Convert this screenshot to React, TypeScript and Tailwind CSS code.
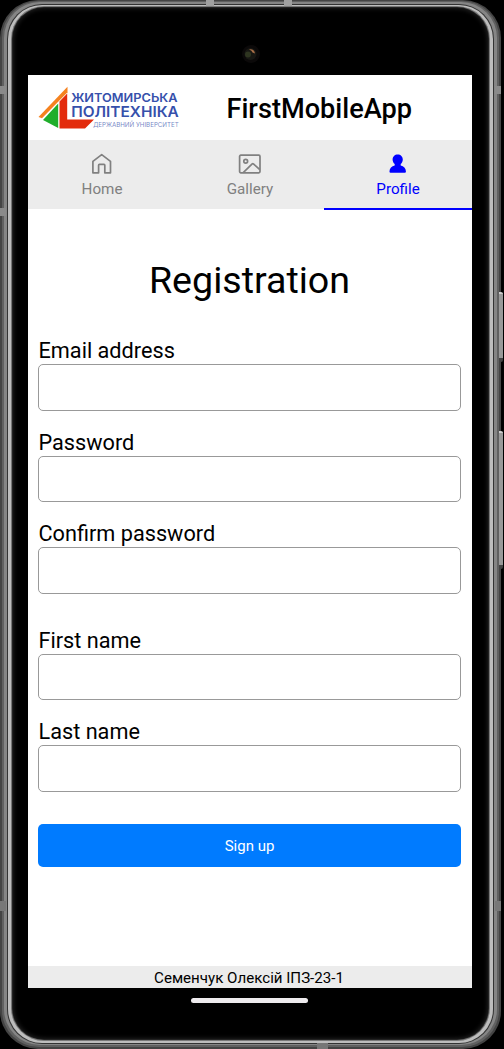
import React from "react";

function Logo() {
  return (
    <svg width="150" height="52" viewBox="0 -3 150 52" className="block" aria-hidden="true">
      <path d="M0.5 31 L29.5 0.8 V6.2 L4 32.3 Z" fill="#f5821f" />
      <path d="M5 34 L20.2 17.6 V42 Z" fill="#1fae2b" />
      <path d="M21.5 15.5 L29.2 7.6 V33.6 H56 L47 42.6 H21.5 Z" fill="#e32b0c" />
      <g fill="#3650ab" fontFamily="Inter, 'Open Sans', sans-serif">
        <text x="33.2" y="16.4" fontSize="12" fontWeight="600" textLength="106.4" lengthAdjust="spacingAndGlyphs">ЖИТОМИРСЬКА</text>
        <text x="33.2" y="30.7" fontSize="14.7" fontWeight="600" textLength="107.6" lengthAdjust="spacingAndGlyphs">ПОЛІТЕХНІКА</text>
        <text x="55.2" y="41.3" fontSize="6.4" fillOpacity=".7" textLength="85.6" lengthAdjust="spacingAndGlyphs">ДЕРЖАВНИЙ УНІВЕРСИТЕТ</text>
      </g>
    </svg>
  );
}

function HomeIcon() {
  return (
    <svg width="22" height="22" viewBox="0 0 22 22" fill="none" stroke="currentColor" strokeWidth="1.7" strokeLinejoin="round">
      <path d="M1.9 19.8 V8.4 L10.7 1.6 L19.5 8.4 V19.8 H13.8 V12.2 Q13.8 11.4 13 11.4 H8.4 Q7.6 11.4 7.6 12.2 V19.8 Z" />
    </svg>
  );
}

function GalleryIcon() {
  return (
    <svg width="24" height="22" viewBox="0 0 24 22" fill="none" stroke="currentColor" strokeWidth="1.7" strokeLinejoin="round">
      <rect x="1.6" y="2.2" width="20.4" height="17.6" rx="1.2" />
      <circle cx="7.7" cy="8.2" r="1.9" />
      <path d="M5.2 19.6 L14.2 10.9 Q14.8 10.4 15.4 10.9 L21.8 16.6" />
    </svg>
  );
}

function ProfileIcon() {
  return (
    <svg width="22" height="22" viewBox="0 0 22 22" fill="currentColor">
      <path d="M10.7 1.5 C13.7 1.5 15.8 3.6 15.8 6.5 C15.8 8.4 15 10 13.7 11 V12.4 C16.7 13.3 18.9 15.2 18.9 18.3 V18.7 Q18.9 19.7 17.9 19.7 H3.5 Q2.5 19.7 2.5 18.7 V18.3 C2.5 15.2 4.7 13.3 7.7 12.4 V11 C6.4 10 5.6 8.4 5.6 6.5 C5.6 3.6 7.7 1.5 10.7 1.5 Z" />
    </svg>
  );
}

function Tab({ label, icon, active = false }: { label: string; icon: React.ReactNode; active?: boolean }) {
  return (
    <button
      type="button"
      className={
        active
          ? "flex flex-1 flex-col items-center border-b-2 border-[#0000ff] pt-[13px] text-[#0000ff]"
          : "flex flex-1 flex-col items-center border-b border-white pt-[13px] text-[#808080]"
      }
    >
      {icon}
      <span className="mt-[4px] text-[15.2px] leading-5">{label}</span>
    </button>
  );
}

function Field({ label, type = "text" }: { label: string; type?: string }) {
  return (
    <label className="flex h-[72.5px] flex-col">
      <span className="h-[26px] pl-[0.5px] text-[21.7px] leading-[26px]">{label}</span>
      <input type={type} className="h-[46.5px] w-full rounded-[5px] border border-[#999999] bg-white px-3 outline-none" />
    </label>
  );
}

const frameLayers = [
  "rounded-[38px] bg-[#444444] px-[2px] pt-px pb-[2px]",
  "rounded-[37px] bg-[#606060] px-[2px] pt-px pb-[2px]",
  "rounded-[36px] bg-[#858585] px-[3px] pt-[2px] pb-px",
  "rounded-[35px] bg-[#333333] px-px pt-px pb-px",
  "rounded-[34px] bg-[#bdbdbd] px-[3px] pt-px pb-[2px]",
  "rounded-[33px] bg-[#777777] px-px pt-px pb-px",
  "rounded-[32px] bg-[#222222] px-px pt-px pb-px",
];

function PhoneFrame({ children }: { children: React.ReactNode }) {
  return frameLayers.reduceRight<React.ReactElement>(
    (inner, layer) => <div className={`h-full ${layer}`}>{inner}</div>,
    <div className="flex h-full flex-col rounded-[31px] bg-black shadow-[inset_0_0_5px_#2a2a2a]">{children}</div>,
  );
}

export default function App() {
  return (
    <div className="relative h-[1049px] w-[504px] overflow-hidden bg-black font-[Roboto,'Liberation_Sans',sans-serif] text-black">
      <div className="h-full w-[501px]">
        <PhoneFrame>
          <div className="flex h-[67px] shrink-0 items-start justify-center pt-[36px]">
            <svg width="20" height="20" viewBox="0 0 20 20" aria-hidden="true">
              <circle cx="10" cy="10" r="9" fill="#0b0909" />
              <circle cx="9.5" cy="10" r="6" fill="#171713" />
              <circle cx="7" cy="10.5" r="3" fill="#2e3520" />
              <path d="M8 5.5 Q13 4.5 14 9.5 L11.5 8.5 Q11 6.5 8 5.5 Z" fill="#a86f48" />
            </svg>
          </div>
          <div className="ml-[15px] flex h-[913px] w-[444px] shrink-0 flex-col bg-white">
            <header className="flex h-[65px] shrink-0 items-start pl-[10px] pt-[8px]">
              <Logo />
              <h1 className="ml-[38.5px] mt-[10px] text-[27.15px] font-medium leading-8">FirstMobileApp</h1>
            </header>
            <nav className="flex h-[70px] shrink-0 bg-[#ececec]">
              <Tab label="Home" icon={<HomeIcon />} />
              <Tab label="Gallery" icon={<GalleryIcon />} />
              <Tab label="Profile" icon={<ProfileIcon />} active />
            </nav>
            <main className="flex flex-1 flex-col pl-[10px] pr-[11px]">
              <h2 className="mt-[46px] h-[48px] text-center text-[37.6px] leading-[49px]">Registration</h2>
              <form className="mt-[34px] flex flex-col">
                <div className="flex flex-col gap-[19px]">
                  <Field label="Email address" type="email" />
                  <Field label="Password" type="password" />
                  <Field label="Confirm password" type="password" />
                </div>
                <div className="mt-[34px] flex flex-col gap-[19px]">
                  <Field label="First name" />
                  <Field label="Last name" />
                </div>
                <button type="button" className="mt-[32px] h-[43px] rounded-[5px] bg-[#007bff] pt-[2px] text-[15px] text-white">
                  Sign up
                </button>
              </form>
            </main>
            <footer className="h-[22px] shrink-0 bg-[#ececec] pr-[2px] text-center text-[15.1px] leading-[24px]">
              Семенчук Олексій ІПЗ-23-1
            </footer>
          </div>
          <div className="ml-[178px] mt-[10px] h-[5px] w-[117px] shrink-0 rounded-full bg-[#eeebee]" />
        </PhoneFrame>
      </div>
      <div className="absolute left-[206px] top-0 h-[6px] w-[8px] bg-[#a0a0a0]" />
      <div className="absolute left-[284px] top-0 h-[6px] w-[8px] bg-[#a0a0a0]" />
      <div className="absolute left-0 top-[86px] h-[8px] w-[6px] bg-[#8a8a8a]" />
      <div className="absolute left-0 top-[208px] h-[8px] w-[6px] bg-[#8a8a8a]" />
      <div className="absolute left-[495px] top-[86px] h-[8px] w-[6px] bg-[#8a8a8a]" />
      <div className="absolute left-0 top-[901px] h-[10px] w-[6px] bg-[#787878]" />
      <div className="absolute left-[495px] top-[901px] h-[10px] w-[6px] bg-[#787878]" />
      <div className="absolute left-[317px] top-[1043px] h-[6px] w-[11px] bg-[#777777]" />
      <div className="absolute left-[499px] top-[292px] h-[70px] w-[4px] rounded-r-[2px] border-t-2 border-b-4 border-t-[#cccccc] border-b-[#444444] bg-[#999999]" />
      <div className="absolute left-[499px] top-[431px] h-[138px] w-[4px] rounded-r-[2px] border-t-2 border-b-4 border-t-[#cccccc] border-b-[#444444] bg-[#999999]" />
    </div>
  );
}
